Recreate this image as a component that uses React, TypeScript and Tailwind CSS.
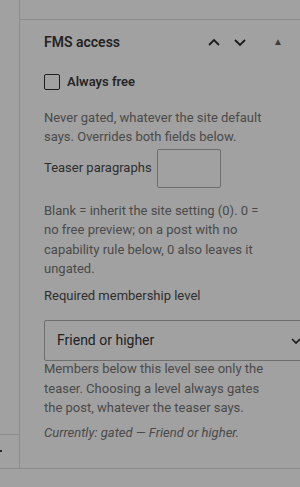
import { useState } from 'react';

function Chevron({ up }: { up?: boolean }) {
  return (
    <svg width="14" height="14" viewBox="0 0 14 14" className="block">
      <path
        d={up ? 'M2 10 L7 5 L12 10' : 'M2 5 L7 10 L12 5'}
        fill="none"
        stroke="#1c1c1c"
        strokeWidth="1.8"
      />
    </svg>
  );
}

export default function App() {
  const [free, setFree] = useState(false);
  const [teaser, setTeaser] = useState('');
  const [level, setLevel] = useState('friend');

  return (
    <div
      className="w-[300px] h-[487px] overflow-hidden bg-[#a1a1a1] flex flex-col"
      style={{ fontFamily: 'Roboto, "Liberation Sans", sans-serif' }}
    >
      <div className="flex h-[469px] border-b border-[#8c8c8c]">
        {/* left column, cut off */}
        <div className="w-[20px] shrink-0 border-r border-[#8c8c8c] flex flex-col justify-end">
          <div className="h-[34px] border-t border-[#8c8c8c] pt-[15px]">
            <div className="w-[2px] h-[2px] bg-[#262626]" />
          </div>
        </div>

        {/* sidebar panel */}
        <div className="flex-1 min-w-0 flex flex-col">
          <div className="h-[20px] border-b border-[#8c8c8c]" />
          <div className="pl-[24px] pt-[12px]">
            <div className="flex items-center h-[20px]">
              <h2 className="text-[14px] font-semibold text-[#242424]">FMS access</h2>
              <div className="ml-auto flex items-center">
                <button className="w-[26px] flex justify-center"><Chevron up /></button>
                <button className="w-[26px] flex justify-center"><Chevron /></button>
                <span className="ml-[20px] mr-[17px] text-[10px] text-[#3c3c3c] leading-none">▲</span>
              </div>
            </div>

            <label className="flex items-center mt-[20px] gap-[7px] cursor-pointer">
              <input
                type="checkbox"
                checked={free}
                onChange={(e) => setFree(e.target.checked)}
                className="appearance-none w-[16px] h-[16px] rounded-[2px] border border-[#1e1e1e] bg-transparent"
              />
              <span className="text-[13px] font-semibold text-[#262626]">Always free</span>
            </label>

            <p className="mt-[16px] w-[230px] text-[13px] leading-[19px] text-[#4a4a4a]">
              Never gated, whatever the site default says. Overrides both fields below.
            </p>

            <div className="flex items-center mt-[3px] gap-[5px]">
              <span className="text-[13px] text-[#2e2e2e]">Teaser paragraphs</span>
              <input
                type="text"
                value={teaser}
                onChange={(e) => setTeaser(e.target.value)}
                className="w-[64px] h-[39px] rounded-[2px] border border-[#6e6e6e] bg-transparent outline-none px-2 text-[13px]"
              />
            </div>

            <p className="mt-[13px] w-[230px] text-[13px] leading-[19.5px] text-[#4a4a4a]">
              Blank = inherit the site setting (0). 0 = no free preview; on a post with no capability rule below, 0 also leaves it ungated.
            </p>

            <div className="mt-[7px] text-[13px] text-[#2e2e2e]">Required membership level</div>

            <div className="relative mt-[15px] w-[266px] h-[41px]">
              <select
                value={level}
                onChange={(e) => setLevel(e.target.value)}
                className="appearance-none w-full h-full rounded-[2px] border border-[#6e6e6e] bg-transparent pl-[12px] text-[14px] text-[#222] outline-none"
              >
                <option value="friend">Friend or higher</option>
              </select>
              <svg width="12" height="12" viewBox="0 0 12 12" className="absolute right-[8px] top-[15px] pointer-events-none">
                <path d="M2 4 L6 8 L10 4" fill="none" stroke="#1c1c1c" strokeWidth="1.6" />
              </svg>
            </div>

            <p className="-mt-[2px] w-[230px] text-[13px] leading-[19.5px] text-[#4a4a4a]">
              Members below this level see only the teaser. Choosing a level always gates the post, whatever the teaser says.
            </p>
            <p className="mt-[5px] text-[13px] italic text-[#4a4a4a]">
              Currently: gated — Friend or higher.
            </p>
          </div>
        </div>
      </div>
    </div>
  );
}
